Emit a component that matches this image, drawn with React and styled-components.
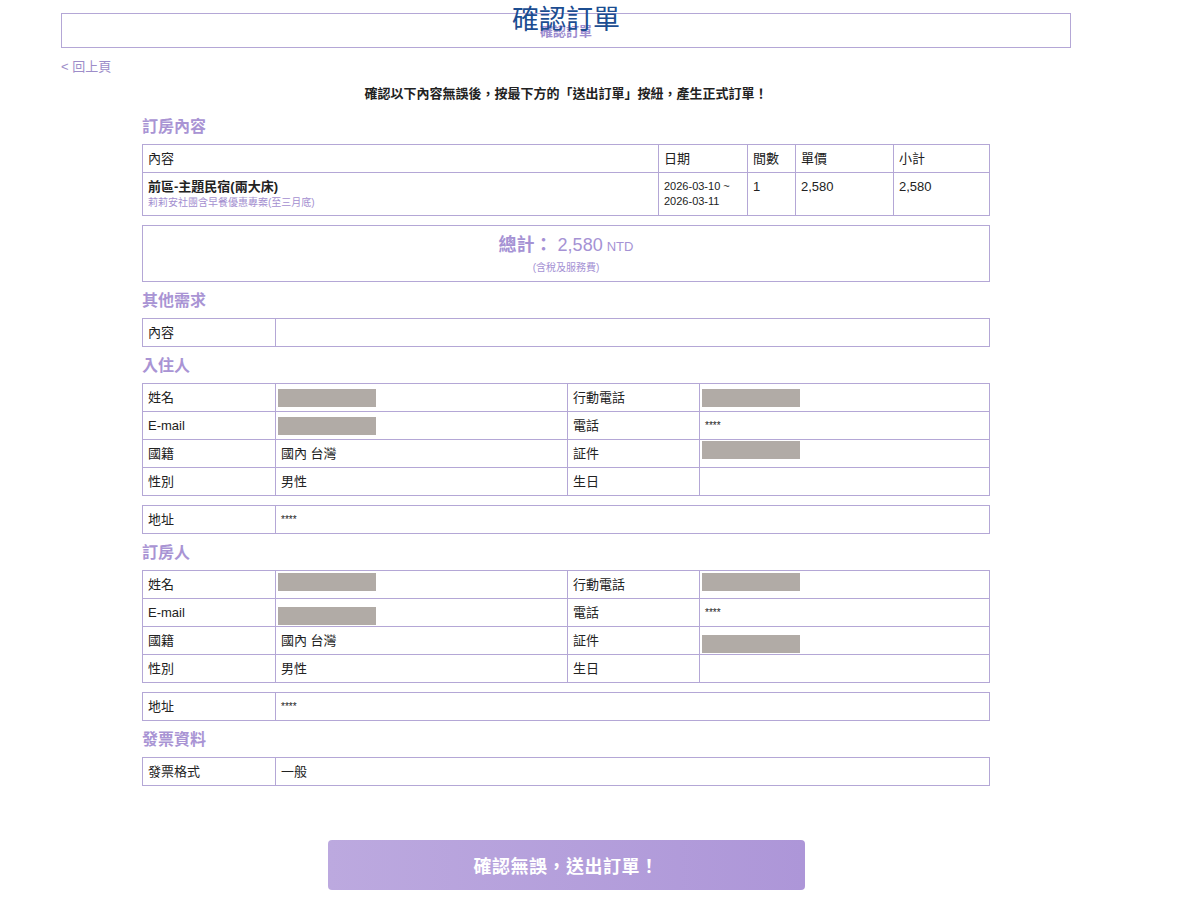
import React from 'react';
import styled, { createGlobalStyle } from 'styled-components';

const GlobalStyle = createGlobalStyle`
  html, body {
    margin: 0;
    padding: 0;
    background: #ffffff;
  }
  body {
    font-family: "Liberation Sans", "Noto Sans CJK TC", sans-serif;
    color: #222222;
  }
`;

const Page = styled.div`
  width: 1010px;
  margin-left: 61px;
  padding-top: 13px;
  padding-bottom: 10px;
`;

const Header = styled.div`
  position: relative;
  height: 35px;
  box-sizing: border-box;
  border: 1px solid #b4a7d6;
  display: flex;
  align-items: center;
  justify-content: center;
`;

const HeaderLabel = styled.span`
  font-size: 13px;
  font-weight: bold;
  color: #9d8dd0;
  line-height: 16px;
  margin-top: 2px;
`;

const PageTitle = styled.h1`
  position: absolute;
  top: -7px;
  left: 0;
  right: 0;
  margin: 0;
  text-align: center;
  font-size: 27px;
  font-weight: normal;
  line-height: 1;
  color: #1c4d91;
`;

const BackLink = styled.a`
  display: inline-block;
  margin-top: 10px;
  font-size: 13px;
  line-height: 18px;
  color: #9d8dc9;
  text-decoration: none;
  cursor: pointer;
`;

const Notice = styled.p`
  margin: 10px 0 0;
  text-align: center;
  font-size: 13px;
  line-height: 16px;
  font-weight: bold;
  color: #222;
`;

const Content = styled.div`
  width: 848px;
  margin: 0 auto;
`;

const SectionTitle = styled.h2`
  margin: ${p => p.$first ? '14px' : '8px'} 0 6px;
  font-size: 16px;
  line-height: 22px;
  font-weight: bold;
  color: #a994d4;
`;

const Table = styled.table`
  width: 100%;
  border-collapse: collapse;
  table-layout: fixed;
  margin-top: ${p => p.$gap || 0}px;
  font-size: 13px;
`;

const Cell = styled.td`
  border: 1px solid #b4a7d6;
  height: 28px;
  box-sizing: border-box;
  padding: 0 ${p => p.$bar ? '2px' : '5px'};
  vertical-align: ${p => p.$bar ? 'top' : 'middle'};
  line-height: 16px;
  color: #222;
`;

const DataCell = styled(Cell)`
  vertical-align: top;
  padding: 6px 5px 4px;
  height: auto;
`;

const ItemName = styled.div`
  font-weight: bold;
  line-height: 16px;
`;

const ItemPlan = styled.div`
  font-size: 10px;
  line-height: 16px;
  color: #a48fd0;
`;

const DateText = styled.div`
  font-size: 11px;
  line-height: 15px;
`;

const Redacted = styled.div`
  width: 98px;
  height: 18px;
  margin-top: ${p => p.$top}px;
  background: #b1aba6;
`;

const Stars = styled.span`
  font-size: 10px;
`;

const TotalBox = styled.div`
  margin-top: 9px;
  border: 1px solid #b4a7d6;
  padding: 7px 0 6px;
  text-align: center;
  color: #a592d4;
`;

const TotalLine = styled.div`
  font-size: 18px;
  line-height: 24px;
`;

const TotalLabel = styled.span`
  font-weight: bold;
`;

const Currency = styled.span`
  font-size: 13px;
  margin-left: 4px;
`;

const TotalNote = styled.div`
  font-size: 10px;
  line-height: 14px;
  margin-top: 2px;
`;

const ButtonRow = styled.div`
  display: flex;
  justify-content: center;
  margin-top: 54px;
`;

const SubmitButton = styled.button`
  width: 477px;
  height: 50px;
  border: none;
  border-radius: 4px;
  background: linear-gradient(90deg, #bca9df 0%, #ad96d8 100%);
  color: #ffffff;
  font-family: "Liberation Sans", "Noto Sans CJK TC", sans-serif;
  font-size: 18px;
  font-weight: bold;
  letter-spacing: 0.5px;
  cursor: pointer;
`;

function Value({ v }) {
  if (v && typeof v === 'object') {
    return <Cell $bar><Redacted $top={v.bar} /></Cell>;
  }
  if (v === '****') return <Cell><Stars>****</Stars></Cell>;
  return <Cell>{v}</Cell>;
}

function PersonTable({ rows }) {
  return (
    <Table>
      <colgroup>
        <col style={{ width: 133 }} />
        <col style={{ width: 292 }} />
        <col style={{ width: 132 }} />
        <col />
      </colgroup>
      <tbody>
        {rows.map(r => (
          <tr key={r[0]}>
            <Cell>{r[0]}</Cell>
            <Value v={r[1]} />
            <Cell>{r[2]}</Cell>
            <Value v={r[3]} />
          </tr>
        ))}
      </tbody>
    </Table>
  );
}

function PairTable({ label, value, gap }) {
  return (
    <Table $gap={gap}>
      <colgroup>
        <col style={{ width: 133 }} />
        <col />
      </colgroup>
      <tbody>
        <tr>
          <Cell>{label}</Cell>
          <Value v={value} />
        </tr>
      </tbody>
    </Table>
  );
}

const guestRows = [
  ['姓名', { bar: 5 }, '行動電話', { bar: 5 }],
  ['E-mail', { bar: 5 }, '電話', '****'],
  ['國籍', '國內 台灣', '証件', { bar: 1 }],
  ['性別', '男性', '生日', ''],
];

const bookerRows = [
  ['姓名', { bar: 2 }, '行動電話', { bar: 2 }],
  ['E-mail', { bar: 8 }, '電話', '****'],
  ['國籍', '國內 台灣', '証件', { bar: 8 }],
  ['性別', '男性', '生日', ''],
];

export default function App() {
  return (
    <>
      <GlobalStyle />
      <Page>
        <Header>
          <HeaderLabel>確認訂單</HeaderLabel>
          <PageTitle>確認訂單</PageTitle>
        </Header>
        <BackLink>&lt; 回上頁</BackLink>
        <Notice>確認以下內容無誤後，按最下方的「送出訂單」按紐，產生正式訂單！</Notice>

        <Content>
          <SectionTitle $first>訂房內容</SectionTitle>
          <Table>
            <colgroup>
              <col style={{ width: 516 }} />
              <col style={{ width: 89 }} />
              <col style={{ width: 48 }} />
              <col style={{ width: 98 }} />
              <col />
            </colgroup>
            <tbody>
              <tr>
                <Cell>內容</Cell>
                <Cell>日期</Cell>
                <Cell>間數</Cell>
                <Cell>單價</Cell>
                <Cell>小計</Cell>
              </tr>
              <tr>
                <DataCell>
                  <ItemName>前區-主題民宿(兩大床)</ItemName>
                  <ItemPlan>莉莉安社團含早餐優惠專案(至三月底)</ItemPlan>
                </DataCell>
                <DataCell>
                  <DateText>2026-03-10 ~</DateText>
                  <DateText>2026-03-11</DateText>
                </DataCell>
                <DataCell>1</DataCell>
                <DataCell>2,580</DataCell>
                <DataCell>2,580</DataCell>
              </tr>
            </tbody>
          </Table>

          <TotalBox>
            <TotalLine>
              <TotalLabel>總計：</TotalLabel> 2,580<Currency>NTD</Currency>
            </TotalLine>
            <TotalNote>(含稅及服務費)</TotalNote>
          </TotalBox>

          <SectionTitle>其他需求</SectionTitle>
          <PairTable label="內容" value="" />

          <SectionTitle>入住人</SectionTitle>
          <PersonTable rows={guestRows} />
          <PairTable label="地址" value="****" gap={9} />

          <SectionTitle>訂房人</SectionTitle>
          <PersonTable rows={bookerRows} />
          <PairTable label="地址" value="****" gap={9} />

          <SectionTitle>發票資料</SectionTitle>
          <PairTable label="發票格式" value="一般" />
        </Content>

        <ButtonRow>
          <SubmitButton>確認無誤，送出訂單！</SubmitButton>
        </ButtonRow>
      </Page>
    </>
  );
}
